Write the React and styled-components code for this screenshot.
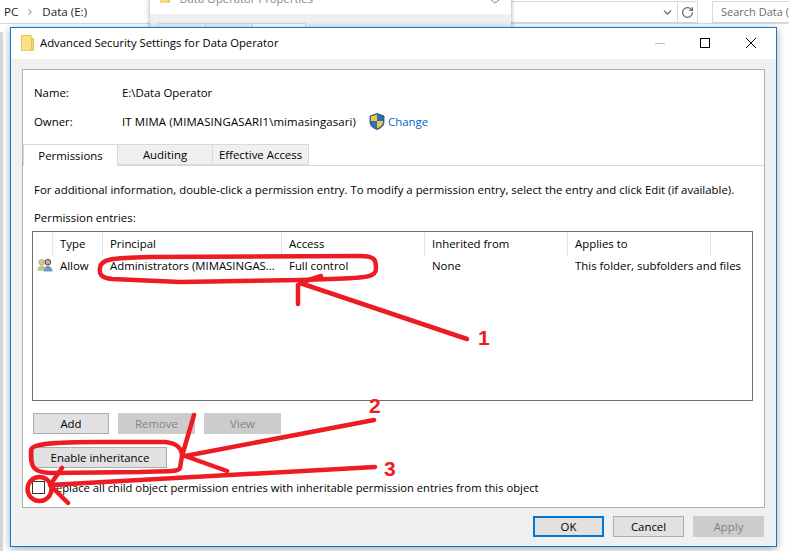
import React from "react";
import styled, { createGlobalStyle } from "styled-components";
import { ChevronDown, ChevronRight, RotateCw } from "lucide-react";

const Global = createGlobalStyle`
  html, body { margin: 0; padding: 0; background: #fff; }
  * { box-sizing: border-box; }
`;

const Desktop = styled.div`
  position: relative;
  width: 789px;
  height: 551px;
  overflow: hidden;
  background: #fff;
  color: #000;
  font-family: "Open Sans", "Noto Sans", sans-serif;
  font-size: 11.4px;
`;

const ExplorerBar = styled.div`
  height: 24px;
  display: flex;
  align-items: center;
  border-bottom: 1px solid #d9d9d9;
  background: #fff;
`;
const Crumbs = styled.div`
  width: 511px;
  flex: none;
  display: flex;
  align-items: center;
  gap: 7px;
  padding-left: 4px;
  font-size: 11.6px;
  color: #222;
`;
const AddressEnd = styled.div`
  width: 187px;
  flex: none;
  height: 22px;
  margin-top: 1px;
  display: flex;
  justify-content: flex-end;
  align-items: center;
  border: 1px solid #d9d9d9;
  border-left: 0;
  color: #666;
`;
const RefreshCell = styled.div`
  width: 20px;
  height: 100%;
  display: flex;
  align-items: center;
  justify-content: center;
  border-left: 1px solid #d9d9d9;
`;
const SearchBox = styled.div`
  width: 77px;
  flex: none;
  height: 22px;
  margin: 1px 0 0 14px;
  padding-left: 8px;
  line-height: 20px;
  border: 1px solid #d9d9d9;
  border-right: 0;
  font-size: 11px;
  color: #6d6d6d;
  white-space: nowrap;
  overflow: hidden;
`;
const ExplorerSide = styled.div`
  height: 527px;
  width: 3px;
  background: #d6d6d6;
  margin-top: 8px;
`;

const BehindWindow = styled.div`
  position: absolute;
  left: 150px;
  top: -10px;
  width: 361px;
  height: 46px;
  background: #f0f0f0;
  box-shadow: 0 0 5px rgba(0,0,0,.35);
`;
const BehindTitle = styled.div`
  height: 24px;
  background: #fff;
  display: flex;
  align-items: flex-start;
  gap: 9px;
  padding-left: 10px;
  line-height: 18px;
  color: #8a8a8a;
  font-size: 11.3px;
  position: relative;
`;
const BehindClose = styled.svg`
  position: absolute;
  right: 10px;
  top: 10px;
`;
const BehindTabs = styled.div`
  display: flex;
  margin: 9px 0 0 8px;
`;
const BehindTab = styled.div`
  width: ${(p) => p.$w}px;
  height: 20px;
  background: ${(p) => (p.$on ? "#fff" : "#f0f0f0")};
  border: 1px solid #d5d5d5;
  border-left-width: ${(p) => (p.$first ? 1 : 0)}px;
`;

const Dialog = styled.div`
  position: absolute;
  left: 10px;
  top: 27px;
  width: 767px;
  height: 520px;
  display: flex;
  flex-direction: column;
  background: #f0f0f0;
  border: 1px solid #0a7ad6;
  box-shadow: 0 2px 8px rgba(0,0,0,.35);
`;
const TitleBar = styled.div`
  height: 31px;
  flex: none;
  display: flex;
  align-items: center;
  background: #fff;
  padding: 0 1px 2px 10px;
  font-size: 11.3px;
`;
const TitleText = styled.span`
  margin-left: 6px;
  flex: 1;
`;
const WinControls = styled.div`
  display: flex;
  align-items: center;
`;
const WinBtn = styled.svg`
  width: 46px;
  height: 12px;
  display: block;
`;
const Panel = styled.div`
  margin: 10px 11px 0;
  height: 439px;
  flex: none;
  background: #fff;
  border: 1px solid #b2b2b2;
  display: flex;
  flex-direction: column;
`;
const InfoRow = styled.div`
  display: flex;
  align-items: center;
  height: 16px;
  margin-left: 11px;
  margin-top: ${(p) => p.$mt}px;
`;
const InfoLabel = styled.span`
  width: 88px;
`;
const OwnerName = styled.span`
  letter-spacing: 0.13px;
  margin-right: 13px;
`;
const ChangeLink = styled.span`
  color: #0066cc;
  margin-left: 3px;
`;
const TabStrip = styled.div`
  display: flex;
  align-items: flex-end;
  height: 22px;
  margin-top: 15px;
  border-bottom: 1px solid #d9d9d9;
`;
const Tab = styled.div`
  width: ${(p) => p.$w}px;
  height: ${(p) => (p.$active ? "22px" : "21px")};
  margin-bottom: ${(p) => (p.$active ? "-1px" : "0")};
  margin-left: ${(p) => (p.$active ? "0" : "-1px")};
  padding-bottom: ${(p) => (p.$active ? "1px" : "0")};
  display: flex;
  align-items: center;
  justify-content: center;
  background: ${(p) => (p.$active ? "#fff" : "#f0f0f0")};
  border: 1px solid #d9d9d9;
  border-bottom: ${(p) => (p.$active ? "0" : "1px solid #d9d9d9")};
`;
const HelpLine = styled.div`
  margin: 16px 0 0 11px;
  height: 16px;
  line-height: 16px;
  white-space: nowrap;
`;
const EntriesLabel = styled(HelpLine)`
  margin-top: 12px;
`;
const ListBox = styled.div`
  margin: 5px 0 0 9px;
  width: 721px;
  height: 170px;
  flex: none;
  border: 1px solid #6e6e6e;
`;
const ListRow = styled.div`
  display: grid;
  grid-template-columns: 20px 50px 179px 143px 143px 143px 1fr;
  align-items: center;
  height: ${(p) => p.$h}px;
`;
const HeadCell = styled.div`
  height: 24px;
  line-height: 23px;
  padding-left: 7px;
  border-right: 1px solid #e5e5e5;
  white-space: nowrap;
`;
const Cell = styled.div`
  padding-left: 7px;
  white-space: nowrap;
`;
const IconCell = styled.div`
  padding-left: 4px;
  display: flex;
  align-items: center;
`;
const ButtonRow = styled.div`
  display: flex;
  gap: 9px;
  margin: 12px 0 0 10px;
`;
const Btn = styled.div`
  width: ${(p) => p.$w}px;
  height: 21px;
  display: flex;
  align-items: center;
  justify-content: center;
  background: ${(p) => (p.$disabled ? "#cccccc" : "#e1e1e1")};
  color: ${(p) => (p.$disabled ? "#838383" : "#000")};
  border: ${(p) => (p.$primary ? "2px solid #0078d7" : p.$disabled ? "1px solid #cccccc" : "1px solid #adadad")};
`;
const InheritRow = styled.div`
  margin: 13px 0 0 10px;
`;
const CheckRow = styled.div`
  display: flex;
  align-items: center;
  height: 16px;
  margin: 11px 0 0 9px;
  gap: 4px;
  white-space: nowrap;
  font-size: 11.24px;
`;
const CheckBox = styled.div`
  width: 13px;
  height: 13px;
  background: #fff;
  border: 1px solid #333;
`;
const Footer = styled.div`
  display: flex;
  justify-content: flex-end;
  gap: 9px;
  margin: 8px 12px 0 0;
`;
const Annotations = styled.svg`
  position: absolute;
  left: 0;
  top: 0;
  pointer-events: none;
`;
const Numeral = styled.span`
  position: absolute;
  left: ${(p) => p.$x}px;
  top: ${(p) => p.$y}px;
  color: #ed1c24;
  font-family: "Liberation Sans", sans-serif;
  font-weight: 700;
  font-size: 21px;
  line-height: 22px;
`;

const Folder = ({ s = 1 }) => (
  <svg width={13 * s} height={16 * s} viewBox="0 0 13 16" style={{ flex: "none" }}>
    <path d="M.5.5h9.5l.5 1v13.8H.5z" fill="#fbe08a" stroke="#e8c14d" />
    <path d="M10.5 3.5h2v11.8h-2z" fill="#f7d264" stroke="#e8c14d" />
  </svg>
);
const Shield = () => (
  <svg width="16" height="17" viewBox="0 0 16 17" style={{ flex: "none" }}>
    <path d="M8 .5 15 3v6c0 4-3.2 6.2-7 7.5C4.2 15.2 1 13 1 9V3z" fill="#2f6fb5" stroke="#1f3f70" strokeWidth=".8" />
    <path d="M8 1.5V8H1.8V3.6zM8 8h6.2c0 3.6-2.8 6-6.2 7.4z" fill="#f3c63d" />
  </svg>
);
const Users = () => (
  <svg width="17" height="15" viewBox="0 0 17 15">
    <circle cx="5" cy="4" r="3" fill="#dcc48f" stroke="#8b9a5e" strokeWidth=".6" />
    <path d="M.5 13c0-4 2-5.500 4.500-5.500S9 9 9 13z" fill="#b7cb85" />
    <circle cx="11.500" cy="4" r="3" fill="#d9a77e" stroke="#3f3f4f" strokeWidth="1" />
    <path d="M7 14c0-4 2-6 4.500-6s5 2 5 6z" fill="#6d9cc8" />
  </svg>
);

export default function App() {
  return (
    <Desktop>
      <Global />
      <ExplorerBar>
        <Crumbs>
          <span>PC</span>
          <ChevronRight size={10} color="#888" strokeWidth={2.5} />
          <span>Data (E:)</span>
        </Crumbs>
        <AddressEnd>
          <ChevronDown size={13} strokeWidth={2.5} style={{ marginRight: 3 }} />
          <RefreshCell>
            <RotateCw size={13} strokeWidth={2.2} />
          </RefreshCell>
        </AddressEnd>
        <SearchBox>Search Data (E:)</SearchBox>
      </ExplorerBar>
      <ExplorerSide />

      <BehindWindow>
        <BehindTitle>
          <Folder s={0.8} />
          <span>Data Operator Properties</span>
          <BehindClose width="12" height="4" viewBox="0 0 12 4">
            <path d="M2 0l4 3M10 0 6 3" stroke="#888" fill="none" />
          </BehindClose>
        </BehindTitle>
        <BehindTabs>
          <BehindTab $w={48} $first />
          <BehindTab $w={47} />
          <BehindTab $w={53} $on />
        </BehindTabs>
      </BehindWindow>

      <Dialog>
        <TitleBar>
          <Folder />
          <TitleText>Advanced Security Settings for Data Operator</TitleText>
          <WinControls>
            <WinBtn viewBox="0 0 46 12"><path d="M18 6.500h10" stroke="#bbb" /></WinBtn>
            <WinBtn viewBox="0 0 46 12"><rect x="17.500" y="1.500" width="9" height="9" fill="none" stroke="#000" /></WinBtn>
            <WinBtn viewBox="0 0 46 12"><path d="M17 1l10 10M27 1 17 11" stroke="#000" fill="none" /></WinBtn>
          </WinControls>
        </TitleBar>
        <Panel>
          <InfoRow $mt={14}><InfoLabel>Name:</InfoLabel><span>E:\Data Operator</span></InfoRow>
          <InfoRow $mt={13}>
            <InfoLabel>Owner:</InfoLabel>
            <OwnerName>IT MIMA (MIMASINGASARI1\mimasingasari)</OwnerName>
            <Shield />
            <ChangeLink>Change</ChangeLink>
          </InfoRow>
          <TabStrip>
            <Tab $active $w={95}>Permissions</Tab>
            <Tab $w={96}>Auditing</Tab>
            <Tab $w={97}>Effective Access</Tab>
          </TabStrip>
          <HelpLine>For additional information, double-click a permission entry. To modify a permission entry, select the entry and click Edit (if available).</HelpLine>
          <EntriesLabel>Permission entries:</EntriesLabel>
          <ListBox>
            <ListRow $h={24}>
              <HeadCell />
              <HeadCell>Type</HeadCell>
              <HeadCell>Principal</HeadCell>
              <HeadCell>Access</HeadCell>
              <HeadCell>Inherited from</HeadCell>
              <HeadCell>Applies to</HeadCell>
            </ListRow>
            <ListRow $h={18}>
              <IconCell><Users /></IconCell>
              <Cell>Allow</Cell>
              <Cell>Administrators (MIMASINGAS...</Cell>
              <Cell>Full control</Cell>
              <Cell>None</Cell>
              <Cell>This folder, subfolders and files</Cell>
            </ListRow>
          </ListBox>
          <ButtonRow>
            <Btn $w={76}>Add</Btn>
            <Btn $w={77} $disabled>Remove</Btn>
            <Btn $w={77} $disabled>View</Btn>
          </ButtonRow>
          <InheritRow><Btn $w={134}>Enable inheritance</Btn></InheritRow>
          <CheckRow>
            <CheckBox />
            <span>Replace all child object permission entries with inheritable permission entries from this object</span>
          </CheckRow>
        </Panel>
        <Footer>
          <Btn $w={71} $primary>OK</Btn>
          <Btn $w={71}>Cancel</Btn>
          <Btn $w={71} $disabled>Apply</Btn>
        </Footer>
      </Dialog>

      <Annotations width="789" height="551" viewBox="0 0 789 551" fill="none" stroke="#ed1c24" strokeWidth="4.5" strokeLinecap="round" strokeLinejoin="round">
        <path d="M100 268C100 259 112 258 150 257L360 256C375 256 376 260 376 268C376 276 372 278 330 279L300 280L180 282L112 279C101 278 99 274 100 268" />
        <path d="M467 339 300 283M298 285V304M300 283 321 276" />
        <path d="M374 420 185 456 227 471M194 415 182 456" />
        <path d="M182 456 180 468C178 472 170 471 140 472L50 473C34 472 30 468 31 450C32 444 50 442 100 442L165 442C178 443 182 450 182 456" />
        <path d="M375 467 50 485M62 468 50 485M55 490 68 503" />
        <circle cx="39.500" cy="489" r="12" />
      </Annotations>
      <Numeral $x={478} $y={327}>1</Numeral>
      <Numeral $x={369} $y={395}>2</Numeral>
      <Numeral $x={384} $y={458}>3</Numeral>
    </Desktop>
  );
}
